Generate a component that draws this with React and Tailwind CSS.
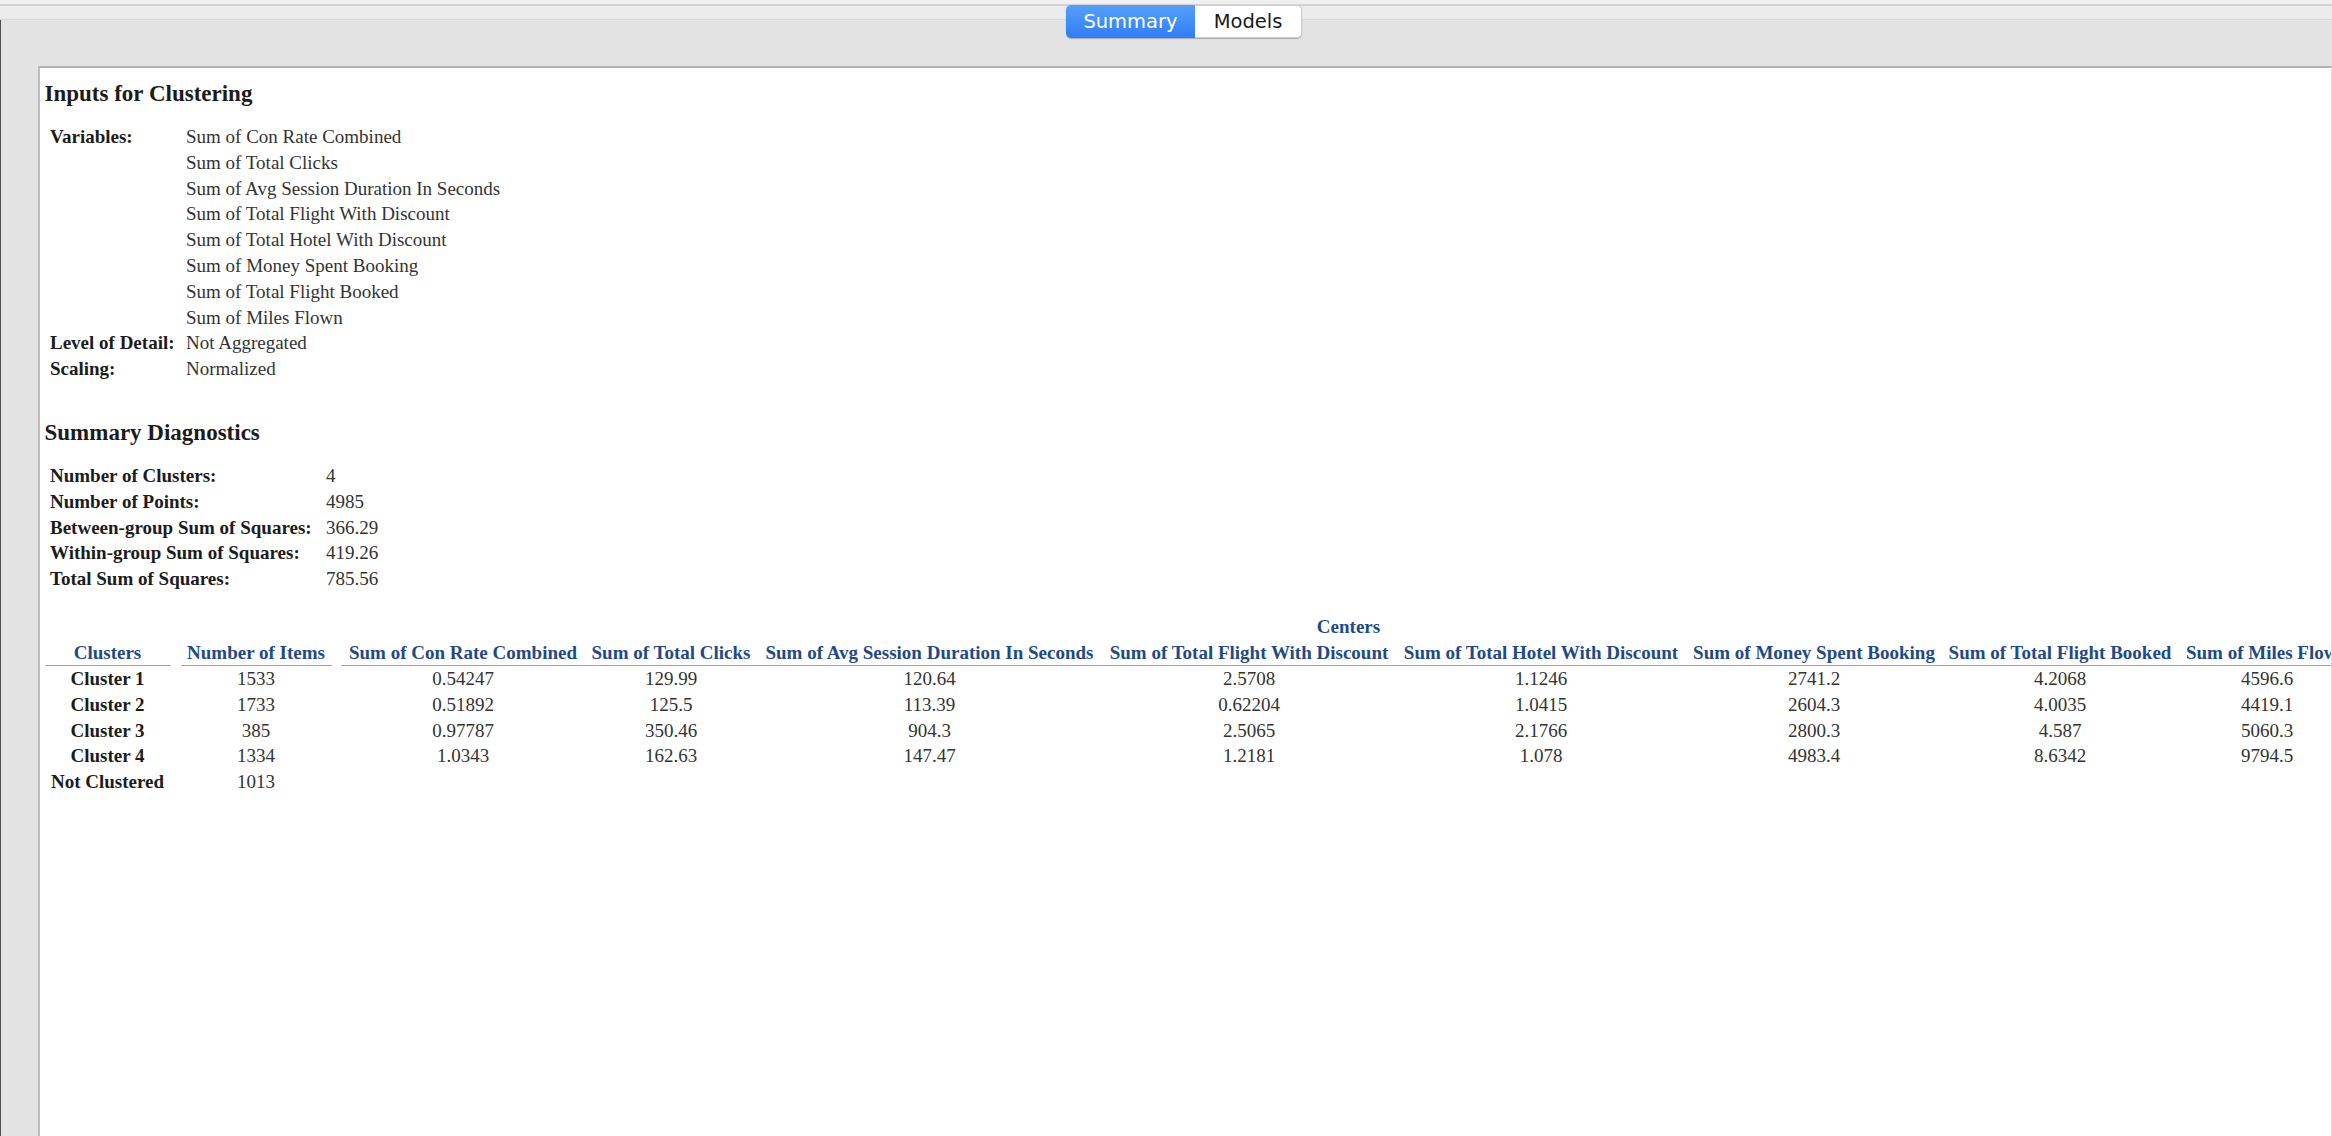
import React from "react";

const serif = { fontFamily: '"Liberation Serif", "Times New Roman", serif' };

const inputRows = [
  ["Variables:", "Sum of Con Rate Combined"],
  ["", "Sum of Total Clicks"],
  ["", "Sum of Avg Session Duration In Seconds"],
  ["", "Sum of Total Flight With Discount"],
  ["", "Sum of Total Hotel With Discount"],
  ["", "Sum of Money Spent Booking"],
  ["", "Sum of Total Flight Booked"],
  ["", "Sum of Miles Flown"],
  ["Level of Detail:", "Not Aggregated"],
  ["Scaling:", "Normalized"],
];

const diagnostics = [
  ["Number of Clusters:", "4"],
  ["Number of Points:", "4985"],
  ["Between-group Sum of Squares:", "366.29"],
  ["Within-group Sum of Squares:", "419.26"],
  ["Total Sum of Squares:", "785.56"],
];

const clusters = [
  { name: "Cluster 1", items: "1533", centers: ["0.54247", "129.99", "120.64", "2.5708", "1.1246", "2741.2", "4.2068", "4596.6"] },
  { name: "Cluster 2", items: "1733", centers: ["0.51892", "125.5", "113.39", "0.62204", "1.0415", "2604.3", "4.0035", "4419.1"] },
  { name: "Cluster 3", items: "385", centers: ["0.97787", "350.46", "904.3", "2.5065", "2.1766", "2800.3", "4.587", "5060.3"] },
  { name: "Cluster 4", items: "1334", centers: ["1.0343", "162.63", "147.47", "1.2181", "1.078", "4983.4", "8.6342", "9794.5"] },
  { name: "Not Clustered", items: "1013", centers: [] },
];

const centerColumns = [
  "Sum of Con Rate Combined",
  "Sum of Total Clicks",
  "Sum of Avg Session Duration In Seconds",
  "Sum of Total Flight With Discount",
  "Sum of Total Hotel With Discount",
  "Sum of Money Spent Booking",
  "Sum of Total Flight Booked",
  "Sum of Miles Flown",
];

const centerGrid =
  "grid grid-cols-[244px_172px_345px_294px_290px_256px_236px_178px]";

function SegmentedControl() {
  return (
    <div
      className="absolute top-[5px] left-[1066px] flex h-[33px] rounded-[5px] shadow-[0_1px_1px_rgba(0,0,0,0.25)]"
      style={{ fontFamily: '"DejaVu Sans", "Liberation Sans", sans-serif' }}
    >
      <div className="flex w-[129px] items-center justify-center rounded-l-[5px] bg-gradient-to-b from-[#56a0f9] to-[#2f7cf6] text-[19.5px] text-white">
        Summary
      </div>
      <div className="flex w-[107px] items-center justify-center rounded-r-[5px] border border-l-0 border-[#cdcdcd] bg-white text-[19.5px] text-[#1a1a1a]">
        Models
      </div>
    </div>
  );
}

function Heading({ children, className = "" }) {
  return (
    <div className={`h-[28px] text-[23px] leading-[28px] font-bold text-[#1c1c1c] ${className}`}>
      {children}
    </div>
  );
}

function ClusterTable() {
  return (
    <div className="mt-[22px] flex w-max text-[19px] leading-[25.8px] whitespace-nowrap">
      <div className="w-[126px] shrink-0">
        <div className="h-[26px]" />
        <div className="h-[26px] border-b border-[#80a9e0] text-center leading-[25px] font-bold text-[#1f4a87]">
          Clusters
        </div>
        {clusters.map((c) => (
          <div key={c.name} className="h-[25.8px] text-center font-bold text-[#1c1c1c]">
            {c.name}
          </div>
        ))}
      </div>

      <div className="ml-[10px] w-[151px] shrink-0">
        <div className="h-[26px]" />
        <div className="h-[26px] border-b border-[#80a9e0] text-center leading-[25px] font-bold text-[#1f4a87]">
          Number of Items
        </div>
        {clusters.map((c) => (
          <div key={c.name} className="h-[25.8px] text-center text-[#333]">
            {c.items}
          </div>
        ))}
      </div>

      <div className="ml-[9.5px] shrink-0">
        <div className="h-[26px] text-center font-bold text-[#1f4a87]">Centers</div>
        <div className={`${centerGrid} h-[26px] border-b border-[#80a9e0] leading-[25px] font-bold text-[#1f4a87]`}>
          {centerColumns.map((col) => (
            <div key={col} className="text-center">
              {col}
            </div>
          ))}
        </div>
        {clusters.map((c) => (
          <div key={c.name} className={`${centerGrid} h-[25.8px] text-[#333]`}>
            {centerColumns.map((col, i) => (
              <div key={col} className="text-center">
                {c.centers[i] || ""}
              </div>
            ))}
          </div>
        ))}
      </div>
    </div>
  );
}

export default function App() {
  return (
    <div className="relative h-[1136px] w-full overflow-hidden bg-[#e3e3e3]">
      <div className="h-[4px] bg-[#f0f0f0]" />
      <div className="h-[2px] bg-[#d3d3d3]" />
      <div className="h-[13px] bg-[#ebebeb]" />
      <div className="h-px bg-[#d9d9d9]" />

      <div className="flex h-[1116px] flex-col border-l border-[#4d4d4d]">
        <div className="h-[46px] shrink-0" />
        <div className="flex min-h-0 flex-1">
          <div className="w-[37px] shrink-0" />
          <div
            className="min-w-0 flex-1 overflow-hidden border-t-2 border-l-2 border-r border-t-[#b3b3b3] border-l-[#bdbdbd] border-r-[#dcdcdc] bg-white pl-[4.5px]"
            style={serif}
          >
            <Heading className="mt-[12px]">Inputs for Clustering</Heading>
            <div className="mt-[16px] pl-[5.5px] text-[19px] leading-[25.8px]">
              {inputRows.map(([label, value], i) => (
                <div key={i} className="flex h-[25.8px]">
                  <div className="w-[136px] shrink-0 font-bold text-[#1c1c1c]">{label}</div>
                  <div className="text-[#333]">{value}</div>
                </div>
              ))}
            </div>

            <Heading className="mt-[37px]">Summary Diagnostics</Heading>
            <div className="mt-[16px] pl-[5.5px] text-[19px] leading-[25.8px]">
              {diagnostics.map(([label, value]) => (
                <div key={label} className="flex h-[25.8px]">
                  <div className="w-[276px] shrink-0 font-bold text-[#1c1c1c]">{label}</div>
                  <div className="text-[#333]">{value}</div>
                </div>
              ))}
            </div>

            <ClusterTable />
          </div>
        </div>
      </div>

      <SegmentedControl />
    </div>
  );
}
